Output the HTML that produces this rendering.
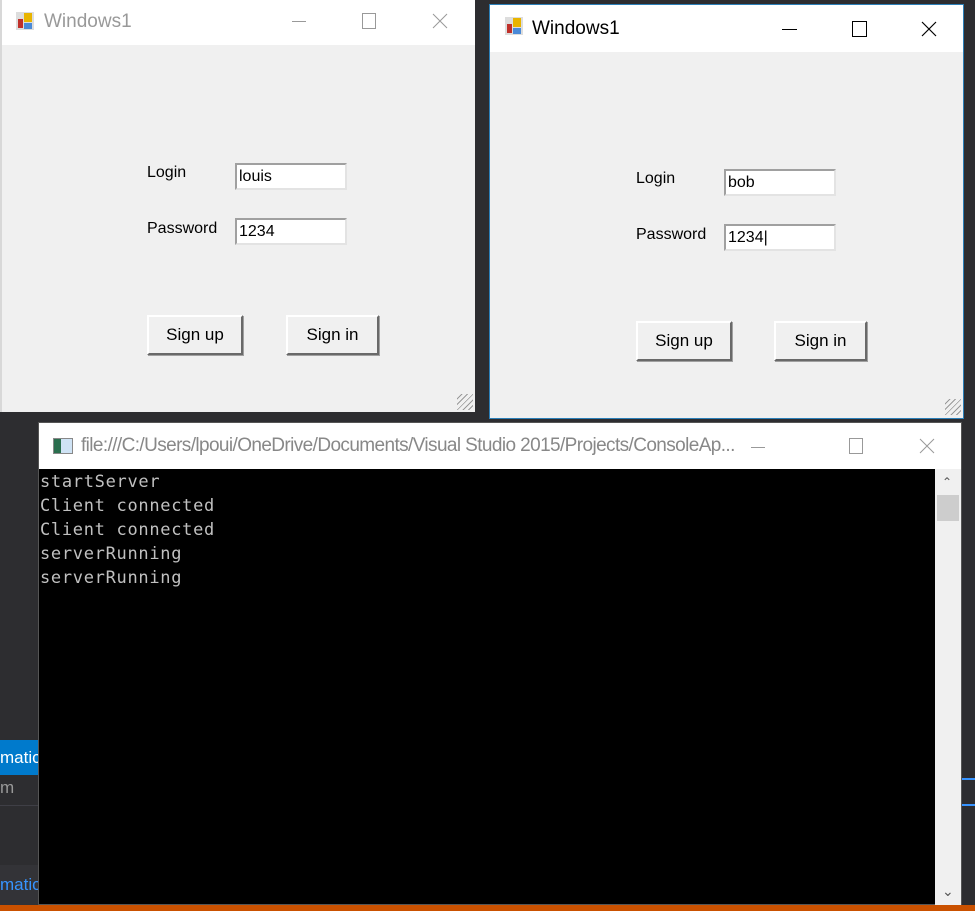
<!DOCTYPE html>
<html><head><style>
*{margin:0;padding:0;box-sizing:border-box}
body{width:975px;height:911px;background:#2d2d30;position:relative;overflow:hidden;font-family:"Liberation Sans",sans-serif}
.abs{position:absolute}
.win{position:absolute;background:#f0f0f0}
.tb{position:absolute;left:0;right:0;top:0;background:#fff}
.lbl{position:absolute;font-size:16px;color:#000}
.txt{position:absolute;width:112px;height:27px;background:#fff;border:2px solid;border-color:#a0a0a0 #e3e3e3 #e3e3e3 #a0a0a0;font-size:16px;padding:3px 2px;color:#000}
.btn{position:absolute;height:40px;background:#f0f0f0;border:2px solid;border-color:#fff #696969 #696969 #fff;box-shadow:1px 1px 0 #a0a0a0;font-size:17px;text-align:center;line-height:36px;color:#000}
.icon{position:absolute;width:18px;height:18px}
.grip{position:absolute;width:16px;height:16px;background:repeating-linear-gradient(135deg,transparent 0 3px,#999 3px 4px)}
.con{font-family:"DejaVu Sans Mono","Liberation Mono",monospace;font-size:17px;color:#c0c0c0;line-height:24px;white-space:pre;letter-spacing:0.7px}
</style></head><body>
<div class="abs" style="left:0;top:740px;width:40px;height:35px;background:#007acc;color:#fff;font-size:17px;line-height:35px">matic</div>
<div class="abs" style="left:0;top:778px;color:#999;font-size:17px">m</div>
<div class="abs" style="left:0;top:805px;width:40px;height:1px;background:#3f3f46"></div>
<div class="abs" style="left:0;top:865px;width:40px;height:40px;background:#333337;color:#3794ff;font-size:17px;line-height:40px">matic</div>
<div class="abs" style="left:962px;top:778px;width:13px;height:28px;border-top:2px solid #3794ff;border-bottom:2px solid #3794ff"></div>
<div class="abs" style="left:0;top:905px;width:975px;height:6px;background:#ca5100"></div>

<div class="win" style="left:0;top:0;width:475px;height:412px;border-left:2px solid #d8d8d8">
 <div class="tb" style="height:45px">
  <svg class="icon" style="left:14px;top:12px" viewBox="0 0 18 18"><rect x="0" y="0" width="18" height="18" fill="#ddd"/><rect x="8" y="1" width="8" height="9" fill="#e8b400"/><rect x="2" y="7" width="5" height="9" fill="#c0302a"/><rect x="8" y="11" width="8" height="6" fill="#4a8ad8"/></svg>
  <div class="abs" style="left:42px;top:11px;font-size:19px;color:#999">Windows1</div>
  <div class="abs" style="left:290px;top:21px;width:14px;height:1px;background:#999"></div>
  <div class="abs" style="left:360px;top:13px;width:14px;height:16px;border:1px solid #999"></div>
  <svg class="abs" style="left:430px;top:13px" width="16" height="16"><path d="M1 1L15 15M15 1L1 15" stroke="#999" stroke-width="1"/></svg>
 </div>
 <div class="lbl" style="left:145px;top:164px">Login</div>
 <div class="txt" style="left:233px;top:163px">louis</div>
 <div class="lbl" style="left:145px;top:220px">Password</div>
 <div class="txt" style="left:233px;top:218px">1234</div>
 <div class="btn" style="left:145px;top:315px;width:96px">Sign up</div>
 <div class="btn" style="left:284px;top:315px;width:93px">Sign in</div>
 <div class="grip" style="left:455px;top:394px"></div>
</div>

<div class="win" style="left:489px;top:4px;width:475px;height:415px;border:1px solid #2b7fb8">
 <div class="tb" style="height:47px">
  <svg class="icon" style="left:15px;top:12px" viewBox="0 0 18 18"><rect x="0" y="0" width="18" height="18" fill="#ddd"/><rect x="8" y="1" width="8" height="9" fill="#e8b400"/><rect x="2" y="7" width="5" height="9" fill="#c0302a"/><rect x="8" y="11" width="8" height="6" fill="#4a8ad8"/></svg>
  <div class="abs" style="left:42px;top:13px;font-size:19px;color:#000">Windows1</div>
  <div class="abs" style="left:292px;top:24px;width:15px;height:1px;background:#000"></div>
  <div class="abs" style="left:362px;top:16px;width:15px;height:16px;border:1px solid #000"></div>
  <svg class="abs" style="left:431px;top:16px" width="16" height="16"><path d="M1 1L15 15M15 1L1 15" stroke="#000" stroke-width="1.2"/></svg>
 </div>
 <div class="lbl" style="left:146px;top:165px">Login</div>
 <div class="txt" style="left:234px;top:164px">bob</div>
 <div class="lbl" style="left:146px;top:221px">Password</div>
 <div class="txt" style="left:234px;top:219px">1234|</div>
 <div class="btn" style="left:146px;top:316px;width:96px">Sign up</div>
 <div class="btn" style="left:284px;top:316px;width:93px">Sign in</div>
 <div class="grip" style="left:455px;top:394px"></div>
</div>

<div class="abs" style="left:38px;top:422px;width:924px;height:483px;background:#000;border:1px solid #555">
 <div class="tb" style="height:46px">
  <div class="abs" style="left:14px;top:15px;width:20px;height:16px;border:1px solid #888;background:linear-gradient(90deg,#2a6e4e 0 40%,#cfe3f5 40%)"></div>
  <div class="abs" style="left:42px;top:12px;font-size:19px;color:#888;letter-spacing:-0.6px;white-space:nowrap">file:///C:/Users/lpoui/OneDrive/Documents/Visual Studio 2015/Projects/ConsoleAp...</div>
  <div class="abs" style="left:712px;top:24px;width:14px;height:1px;background:#999"></div>
  <div class="abs" style="left:810px;top:15px;width:14px;height:16px;border:1px solid #999"></div>
  <svg class="abs" style="left:880px;top:15px" width="16" height="16"><path d="M1 1L15 15M15 1L1 15" stroke="#999" stroke-width="1"/></svg>
 </div>
 <div class="abs con" style="left:1px;top:47px">startServer
Client connected
Client connected
serverRunning
serverRunning</div>
 <div class="abs" style="left:896px;top:46px;width:26px;height:436px;background:#f0f0f0">
  <div class="abs" style="left:7px;top:6px;font-size:12px;color:#555">&#8963;</div>
  <div class="abs" style="left:2px;top:26px;width:22px;height:26px;background:#cdcdcd"></div>
  <div class="abs" style="left:7px;top:414px;font-size:14px;color:#555">&#8964;</div>
 </div>
</div>
</body></html>
